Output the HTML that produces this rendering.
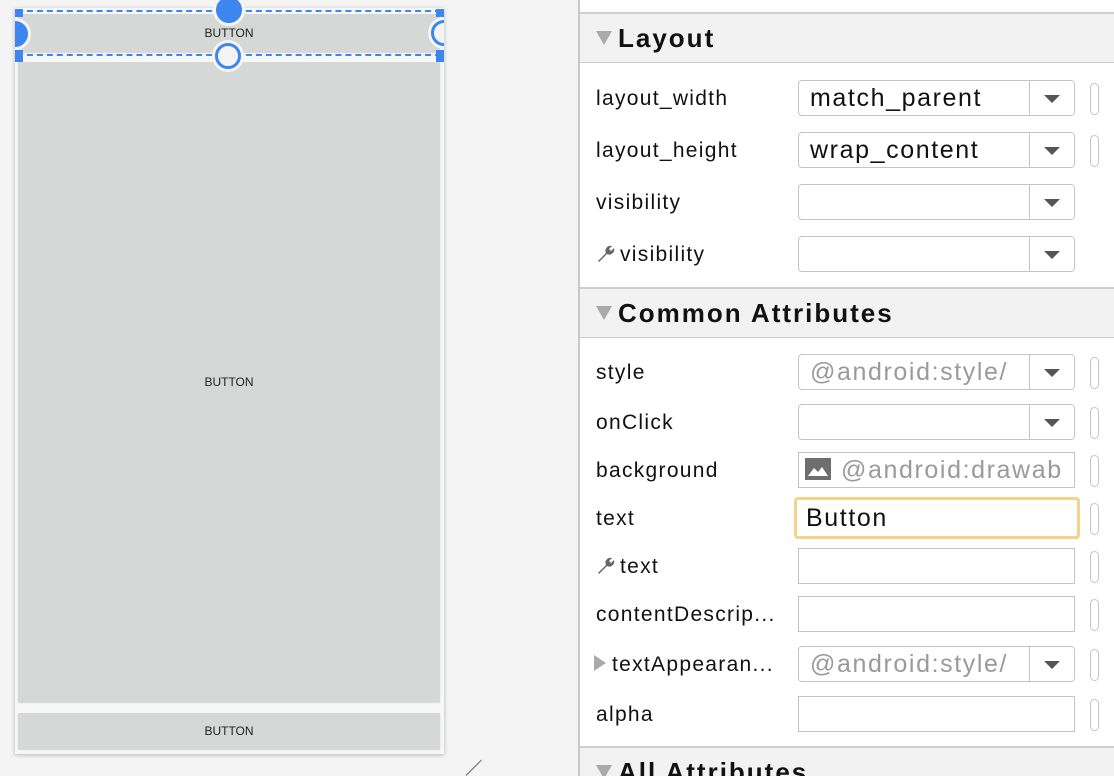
<!DOCTYPE html>
<html><head><style>
html,body{margin:0;width:1114px;height:776px;overflow:hidden}
body{background:#f4f4f4;font-family:"Liberation Sans",sans-serif;position:relative}
.a{position:absolute}
.btn{position:absolute;background:#d6d7d7;font-size:12px;color:#222;display:flex;align-items:center;justify-content:center;box-shadow:0 1px 1px rgba(0,0,0,.15)}
.panel{position:absolute;left:578px;top:0;width:536px;height:776px;background:#fff;border-left:2px solid #c8c8c8;overflow:hidden}
.hdr{position:absolute;left:0;width:536px;height:48px;background:#f2f2f2;border-top:2px solid #cfcfcf;border-bottom:1px solid #cfcfcf;font-weight:bold;font-size:26px;letter-spacing:2px;color:#111;display:flex;align-items:center}
.hdr span.t{display:inline-block;width:0;height:0;border-left:8px solid transparent;border-right:8px solid transparent;border-top:14px solid #aaa;margin:0 6px 0 16px}
.lbl{position:absolute;left:16px;font-size:21px;color:#111;letter-spacing:1.3px}
.box{position:absolute;left:218px;width:277px;height:36px;border:1.5px solid #c4c4c4;border-radius:4px;font-size:25px;color:#111;box-sizing:border-box;padding-left:11px;line-height:34px;letter-spacing:1.6px;white-space:nowrap;overflow:hidden}
.dd{position:absolute;right:0;top:0;width:44px;height:100%;border-left:1.5px solid #c4c4c4;background:#fff}
.dd:after{content:"";position:absolute;left:14px;top:14px;border-left:8px solid transparent;border-right:8px solid transparent;border-top:8px solid #555}
.pill{position:absolute;left:510px;width:7px;height:30px;border:1.5px solid #c4c4c4;border-radius:5px}
.g{color:#9a9a9a}
.w{display:inline-block;width:20px;height:20px;vertical-align:-3px;margin-right:4px}
</style></head><body>
<div class="a" style="left:15px;top:8px;width:429px;height:746px;background:#f7f7f7;box-shadow:0 1px 4px rgba(0,0,0,.25)"></div>
<div class="btn" style="left:18px;top:14px;width:422px;height:38px">BUTTON</div>
<div class="btn" style="left:18px;top:62px;width:422px;height:640px">BUTTON</div>
<div class="btn" style="left:18px;top:713px;width:422px;height:36px">BUTTON</div>
<div class="a" style="left:15px;top:0;width:429px;height:80px;overflow:hidden">
<div class="a" style="left:2px;top:10px;width:424px;height:46px;border-top:2px dashed #3d86f0;border-bottom:2px dashed #3d86f0;box-sizing:border-box"></div>
<div class="a" style="left:0;top:9px;width:8px;height:8px;background:#3d86f0"></div>
<div class="a" style="left:421px;top:9px;width:8px;height:8px;background:#3d86f0"></div>
<div class="a" style="left:0;top:50px;width:8px;height:12px;background:#3d86f0"></div>
<div class="a" style="left:421px;top:50px;width:8px;height:12px;background:#3d86f0"></div>
<div class="a" style="left:198px;top:-6px;width:26px;height:26px;border-radius:50%;background:#3d86f0;border:3px solid #f4f4f4"></div>
<div class="a" style="left:-16px;top:18px;width:26px;height:26px;border-radius:50%;background:#3d86f0;border:3px solid #f4f4f4"></div>
<div class="a" style="left:416px;top:20px;width:20px;height:20px;border-radius:50%;background:#f4f4f4;border:3px solid #3d86f0;box-shadow:0 0 0 3px #f4f4f4"></div>
<div class="a" style="left:200px;top:43px;width:20px;height:20px;border-radius:50%;background:#f4f4f4;border:3px solid #3d86f0;box-shadow:0 0 0 3px #f4f4f4"></div>
</div>
<div class="a" style="left:466px;top:775px;width:22px;height:1px;background:#666;transform:rotate(-45deg);transform-origin:left"></div>
<div class="panel">
<div class="hdr" style="top:12px"><span class="t"></span>Layout</div>
<div class="lbl" style="top:87px">layout_width</div><div class="box" style="top:80px">match_parent<div class="dd"></div></div><div class="pill" style="top:83px"></div>
<div class="lbl" style="top:139px">layout_height</div><div class="box" style="top:132px">wrap_content<div class="dd"></div></div><div class="pill" style="top:135px"></div>
<div class="lbl" style="top:191px">visibility</div><div class="box" style="top:184px"><div class="dd"></div></div>
<div class="lbl" style="top:243px"><svg class="w" viewBox="0 0 20 20"><path d="M2 17 L10 9 A5 5 0 0 1 16 2 L13 5 L15 7 L18 4 A5 5 0 0 1 11 10 L3 18 Z" fill="#666"/></svg>visibility</div><div class="box" style="top:236px"><div class="dd"></div></div>
<div class="hdr" style="top:287px"><span class="t"></span>Common Attributes</div>
<div class="lbl" style="top:361px">style</div><div class="box g" style="top:354px">@android:style/<div class="dd"></div></div><div class="pill" style="top:357px"></div>
<div class="lbl" style="top:411px">onClick</div><div class="box" style="top:404px"><div class="dd"></div></div><div class="pill" style="top:407px"></div>
<div class="lbl" style="top:459px">background</div><div class="box g" style="top:452px;border-radius:0;padding-left:42px"><svg style="position:absolute;left:6px;top:5px" width="26" height="22" viewBox="0 0 26 22"><rect width="26" height="22" fill="#6e6e6e"/><path d="M3 18 L9 10 L13 14 L17 9 L23 18 Z" fill="#fff"/></svg>@android:drawab</div><div class="pill" style="top:455px"></div>
<div class="lbl" style="top:507px">text</div><div class="box" style="top:497px;left:214px;width:286px;height:42px;border:3px solid #f7d28a;line-height:36px;padding-left:9px">Button</div><div class="pill" style="top:503px"></div>
<div class="lbl" style="top:555px"><svg class="w" viewBox="0 0 20 20"><path d="M2 17 L10 9 A5 5 0 0 1 16 2 L13 5 L15 7 L18 4 A5 5 0 0 1 11 10 L3 18 Z" fill="#666"/></svg>text</div><div class="box" style="top:548px;border-radius:0"></div><div class="pill" style="top:551px"></div>
<div class="lbl" style="top:603px">contentDescrip...</div><div class="box" style="top:596px;border-radius:0"></div><div class="pill" style="top:599px"></div>
<div class="lbl" style="top:653px;left:14px"><span style="display:inline-block;border-top:8px solid transparent;border-bottom:8px solid transparent;border-left:12px solid #aaa;margin-right:6px"></span>textAppearan...</div><div class="box g" style="top:646px">@android:style/<div class="dd"></div></div><div class="pill" style="top:649px"></div>
<div class="lbl" style="top:703px">alpha</div><div class="box" style="top:696px;border-radius:0"></div><div class="pill" style="top:699px"></div>
<div class="hdr" style="top:746px"><span class="t"></span>All Attributes</div>
</div>
</body></html>
